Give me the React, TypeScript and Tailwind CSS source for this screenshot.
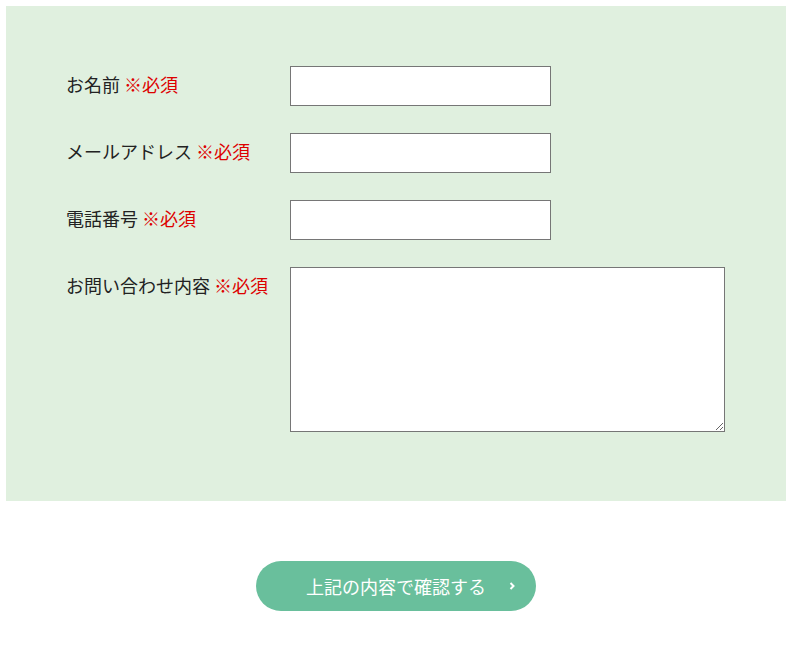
import React from "react";

const font = { fontFamily: '"Noto Sans CJK JP", "Noto Sans", sans-serif' };

function Label({ text }: { text: string }) {
  return (
    <div className="h-10 leading-[37px] text-[18px] text-[#222] -ml-px" style={font}>
      {text} <span className="text-[#dd0000]">※必須</span>
    </div>
  );
}

export default function App() {
  return (
    <div className="min-h-[660px] bg-white px-[6px] pt-[6px]" style={font}>
      <div className="bg-[#e0f0df] pt-[60px] pl-[61px] pb-[69px]">
        <div className="grid grid-cols-[223px_1fr] gap-y-[27px]">
          <Label text="お名前" />
          <div>
            <input className="block w-[261px] h-10 border border-[#767676] bg-white" />
          </div>
          <Label text="メールアドレス" />
          <div>
            <input className="block w-[261px] h-10 border border-[#767676] bg-white" />
          </div>
          <Label text="電話番号" />
          <div>
            <input className="block w-[261px] h-10 border border-[#767676] bg-white" />
          </div>
          <Label text="お問い合わせ内容" />
          <div>
            <textarea className="block w-[435px] h-[165px] border border-[#767676] bg-white resize" />
          </div>
        </div>
      </div>
      <div className="flex justify-center mt-[60px]">
        <button className="relative w-[280px] h-[50px] rounded-full bg-[#69bf9c] text-white text-[18px] flex items-center justify-center">
          <span style={font}>上記の内容で確認する</span>
          <svg
            className="absolute right-[20px] top-1/2 -translate-y-1/2"
            width="8"
            height="10"
            viewBox="0 0 8 10"
            fill="none"
          >
            <path d="M2.5 2 L5.5 5 L2.5 8" stroke="white" strokeWidth="2" />
          </svg>
        </button>
      </div>
    </div>
  );
}
